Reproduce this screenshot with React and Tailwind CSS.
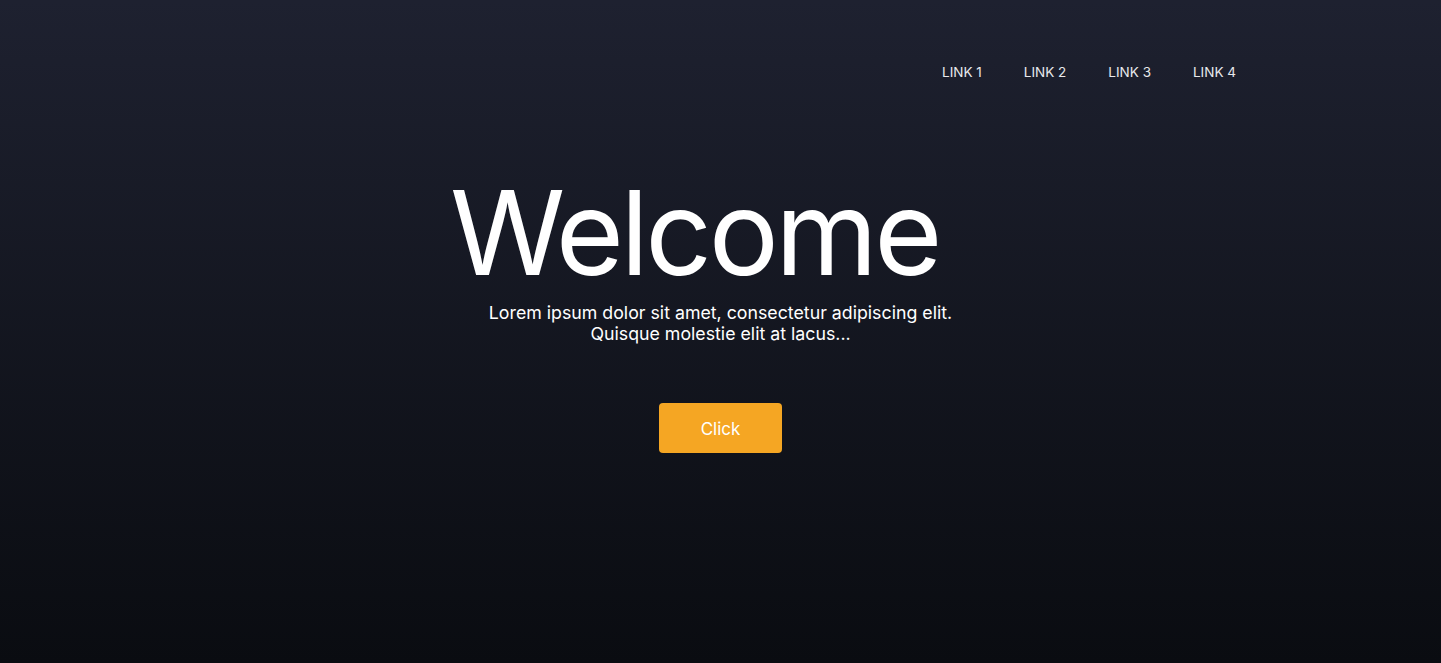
export default function App() {
  return (
    <div
      className="flex h-[663px] w-full flex-col bg-gradient-to-b from-[#1e2130] to-[#0a0c11] text-white"
      style={{ fontFamily: 'Inter, "Noto Sans", sans-serif' }}
    >
      <nav className="mx-auto flex w-[1031px] justify-end gap-[42px] pt-[63px] text-[13.5px] leading-[18px] text-[#e8e9ec]">
        <a href="#">LINK 1</a>
        <a href="#">LINK 2</a>
        <a href="#">LINK 3</a>
        <a href="#">LINK 4</a>
      </nav>

      <main className="flex flex-col items-center">
        <h1 className="mt-[93px] mr-[52px] text-[117px] font-normal leading-[117px] tracking-[-0.03em]">
          Welcome
        </h1>
        <p className="mt-[11px] text-center text-[17.75px] leading-[21px]">
          Lorem ipsum dolor sit amet, consectetur adipiscing elit.
          <br />
          Quisque molestie elit at lacus...
        </p>
        <button className="mt-[59px] h-[50px] w-[123px] rounded-[4px] bg-[#f5a623] pt-[3px] text-[17px] text-white">
          Click
        </button>
      </main>
    </div>
  );
}
